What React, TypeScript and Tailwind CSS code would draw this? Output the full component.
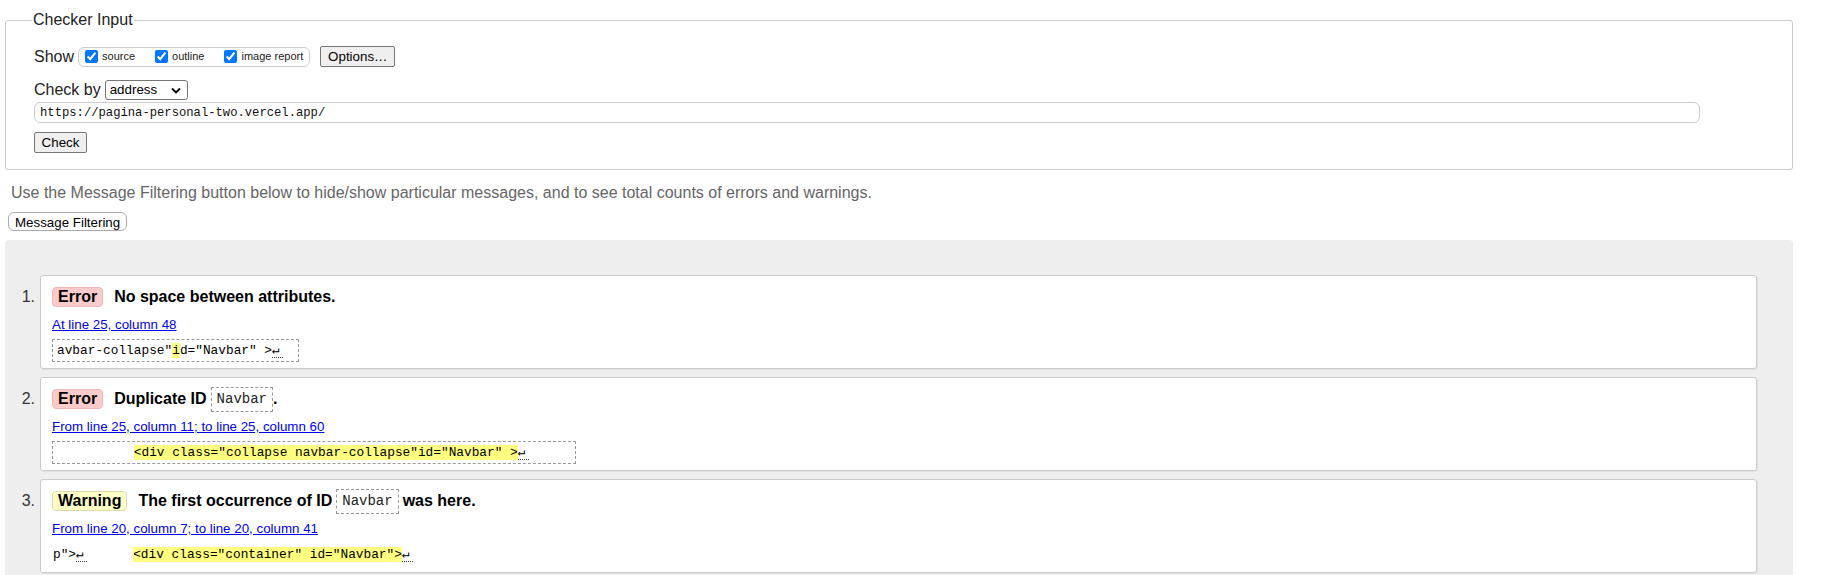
import React from 'react'

type Kind = 'Error' | 'Warning'

function Ret() {
  return <span className="inline-block w-[11px] border-b border-dotted border-[#444] font-['DejaVu_Sans_Mono',monospace] leading-[15px]">↵</span>
}

function Hl({ children }: { children: React.ReactNode }) {
  return <span className="bg-[#ffff80]">{children}</span>
}

function Badge({ kind }: { kind: Kind }) {
  if (kind === 'Error') {
    return <span className="inline-flex items-center h-[20px] px-[5px] border border-[#f0b8b8] bg-[#fbcbcb] rounded-[4px] font-bold text-[16px]">Error</span>
  }
  return <span className="inline-flex items-center h-[20px] px-[5px] border border-[#dcdcae] bg-[#ffffc6] rounded-[4px] font-bold text-[16px]">Warning</span>
}

function IdBox() {
  return (
    <span className="inline-flex items-center h-[25px] mx-[4px] px-[5px] border border-dashed border-[#999] font-['Liberation_Mono',monospace] font-normal text-[14px] text-[#222]">
      Navbar
    </span>
  )
}

function Message({ n, kind, title, link, boxed, children }: { n: number; kind: Kind; title: React.ReactNode; link: string; boxed: boolean; children: React.ReactNode }) {
  return (
    <div className="flex">
      <div className="w-[35px] pr-[5px] pt-[11px] text-right">
        <div className="h-[22px] leading-[22px] text-[16px] text-[#333]">{n}.</div>
      </div>
      <div className="w-[1717px] h-[94px] bg-white border border-[#ccc] rounded-[3px] pl-[11px] pt-[10px] pb-[8px] shadow-[1px_1px_1px_rgba(0,0,0,0.06)]">
        <div className="h-[22px] flex items-center">
          <Badge kind={kind} />
          <div className="ml-[11px] flex items-center font-bold text-[16px]">{title}</div>
        </div>
        <div className="mt-[9px] h-[15px] leading-[15px] text-[13.33px]">
          <a href="#" className="text-[#0000ee] underline">{link}</a>
        </div>
        <div className="mt-[5px] h-[23px]">
          {boxed ? (
            <code className="inline-block h-[23px] leading-[21px] border border-dashed border-[#999] pl-[4px] font-['Liberation_Mono',monospace] text-[12.8px] whitespace-pre">{children}</code>
          ) : (
            <code className="inline-block h-[23px] leading-[21px] border border-transparent font-['Liberation_Mono',monospace] text-[12.8px] whitespace-pre">{children}</code>
          )}
        </div>
      </div>
    </div>
  )
}

export default function App() {
  return (
    <div className="font-['Liberation_Sans',Arial,sans-serif] text-black bg-white min-h-[575px] w-[1829px] pl-[5px]">
      {/* checker form */}
      <fieldset className="mt-[10px] w-[1788px] border border-[#ccc] rounded-[3px] pl-[26px] pt-[16px] pb-[16px]">
        <legend className="px-[1px] text-[16px] leading-[20px] text-[#222]">Checker Input</legend>
        <div className="pl-[2px]">
          <div className="flex items-center h-[21px]">
            <span className="text-[16px] text-[#222]">Show</span>
            <div className="ml-[4px] h-[20px] flex items-center gap-[20px] border border-[#ccc] rounded-[6px] pl-[6px] pr-[6px] text-[11px] text-[#222]">
              <label className="flex items-center">
                <input type="checkbox" defaultChecked className="m-0 w-[13px] h-[13px] mr-[4px]" />
                source
              </label>
              <label className="flex items-center">
                <input type="checkbox" defaultChecked className="m-0 w-[13px] h-[13px] mr-[4px]" />
                outline
              </label>
              <label className="flex items-center">
                <input type="checkbox" defaultChecked className="m-0 w-[13px] h-[13px] mr-[4px]" />
                image report
              </label>
            </div>
            <button className="ml-[10px] w-[75px] h-[21px] bg-[#efefef] border border-[#767676] rounded-[2px] text-[13.33px]">Options…</button>
          </div>

          <div className="mt-[13px] flex items-center h-[20px]">
            <span className="text-[16px] text-[#222]">Check by</span>
            <div className="ml-[4px] w-[83px] h-[20px] flex items-center justify-between border border-[#767676] rounded-[3px] pl-[4px] pr-[6px] text-[13.33px]">
              <span>address</span>
              <svg width="10" height="7" viewBox="0 0 10 7">
                <polyline points="1,1.5 5,5.5 9,1.5" fill="none" stroke="#000" strokeWidth="1.8" />
              </svg>
            </div>
          </div>

          <input
            readOnly
            value="https://pagina-personal-two.vercel.app/"
            className="mt-[2px] block w-[1666px] h-[21px] border border-[#ccc] rounded-[6px] px-[5px] font-['Liberation_Mono',monospace] text-[12.2px] text-[#111]"
          />

          <button className="mt-[9px] block w-[53px] h-[21px] bg-[#efefef] border border-[#767676] rounded-[2px] text-[13.33px]">Check</button>
        </div>
      </fieldset>

      <p className="mt-[14px] pl-[6px] leading-[18px] text-[16px] text-[#666]">
        Use the Message Filtering button below to hide/show particular messages, and to see total counts of errors and warnings.
      </p>
      <button className="mt-[10px] ml-[3px] block h-[19px] px-[6px] border border-[#aaa] rounded-[6px] bg-white text-[13.33px]">Message Filtering</button>

      {/* results */}
      <div className="mt-[9px] w-[1788px] h-[340px] bg-[#eee] rounded-t-[4px] pt-[35px] flex flex-col gap-[8px]">
        <Message n={1} kind="Error" title="No space between attributes." link="At line 25, column 48" boxed>
          {'avbar-collapse"'}<Hl>i</Hl>{'d="Navbar" >'}<Ret />{'  '}
        </Message>
        <Message
          n={2}
          kind="Error"
          title={<>Duplicate ID<IdBox /><span className="-ml-[4px]">.</span></>}
          link="From line 25, column 11; to line 25, column 60"
          boxed
        >
          {'          '}<Hl>{'<div class="collapse navbar-collapse"id="Navbar" >'}</Hl><Ret />{'      '}
        </Message>
        <Message
          n={3}
          kind="Warning"
          title={<>The first occurrence of ID<IdBox />was here.</>}
          link="From line 20, column 7; to line 20, column 41"
          boxed={false}
        >
          {'p">'}<Ret />{'      '}<Hl>{'<div class="container" id="Navbar">'}</Hl><Ret />
        </Message>
      </div>
    </div>
  )
}
